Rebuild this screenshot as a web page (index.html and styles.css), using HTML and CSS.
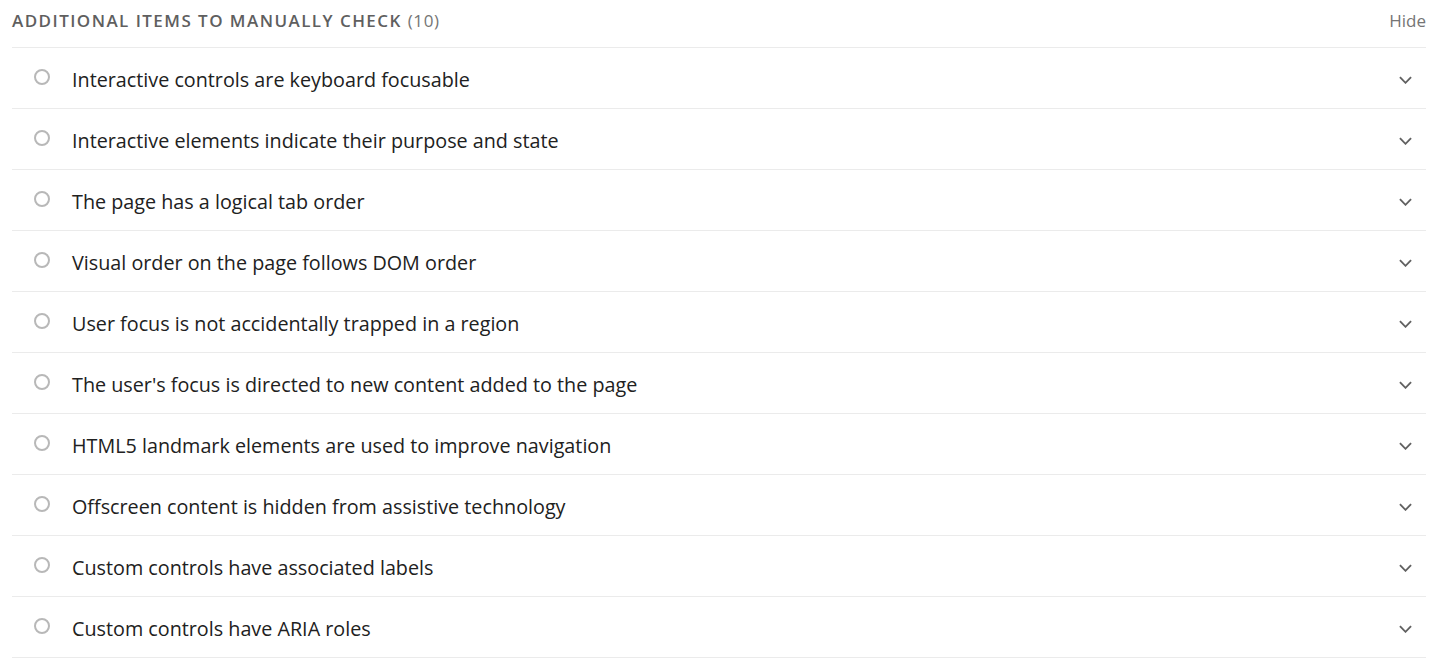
FILE: index.html
```html
<!DOCTYPE html>
<html>
<head>
<meta charset="utf-8">
<link rel="stylesheet" href="styles.css">
</head>
<body>
<section class="panel">
  <header class="head">
    <h2 class="title">ADDITIONAL ITEMS TO MANUALLY CHECK <span class="count">(10)</span></h2>
    <span class="hide">Hide</span>
  </header>
  <ul class="list">
    <li class="row"><span class="dot"></span><span class="label">Interactive controls are keyboard focusable</span><svg class="chev" viewBox="0 0 14 8"><path d="M1 1l6 6 6-6"/></svg></li>
    <li class="row"><span class="dot"></span><span class="label">Interactive elements indicate their purpose and state</span><svg class="chev" viewBox="0 0 14 8"><path d="M1 1l6 6 6-6"/></svg></li>
    <li class="row"><span class="dot"></span><span class="label">The page has a logical tab order</span><svg class="chev" viewBox="0 0 14 8"><path d="M1 1l6 6 6-6"/></svg></li>
    <li class="row"><span class="dot"></span><span class="label">Visual order on the page follows DOM order</span><svg class="chev" viewBox="0 0 14 8"><path d="M1 1l6 6 6-6"/></svg></li>
    <li class="row"><span class="dot"></span><span class="label">User focus is not accidentally trapped in a region</span><svg class="chev" viewBox="0 0 14 8"><path d="M1 1l6 6 6-6"/></svg></li>
    <li class="row"><span class="dot"></span><span class="label">The user's focus is directed to new content added to the page</span><svg class="chev" viewBox="0 0 14 8"><path d="M1 1l6 6 6-6"/></svg></li>
    <li class="row"><span class="dot"></span><span class="label">HTML5 landmark elements are used to improve navigation</span><svg class="chev" viewBox="0 0 14 8"><path d="M1 1l6 6 6-6"/></svg></li>
    <li class="row"><span class="dot"></span><span class="label">Offscreen content is hidden from assistive technology</span><svg class="chev" viewBox="0 0 14 8"><path d="M1 1l6 6 6-6"/></svg></li>
    <li class="row"><span class="dot"></span><span class="label">Custom controls have associated labels</span><svg class="chev" viewBox="0 0 14 8"><path d="M1 1l6 6 6-6"/></svg></li>
    <li class="row"><span class="dot"></span><span class="label">Custom controls have ARIA roles</span><svg class="chev" viewBox="0 0 14 8"><path d="M1 1l6 6 6-6"/></svg></li>
  </ul>
</section>
</body>
</html>
```

FILE: styles.css
```css
html, body {
  margin: 0;
  padding: 0;
  background: #fff;
}
body {
  font-family: "Open Sans", "Noto Sans", sans-serif;
  color: #212121;
}
.panel {
  padding: 0 10px 0 12px;
}
.head {
  display: flex;
  justify-content: space-between;
  align-items: center;
  height: 48px;
  padding-bottom: 7px;
  border-bottom: 1px solid #ebebeb;
  box-sizing: border-box;
}
.title {
  margin: 0;
  font-size: 17px;
  font-weight: 600;
  letter-spacing: 1.45px;
  color: #5f5f5f;
}
.count {
  font-weight: 400;
  letter-spacing: 0.6px;
  color: #757575;
}
.hide {
  font-size: 17px;
  color: #757575;
}
.list {
  list-style: none;
  margin: 0;
  padding: 0;
}
.row {
  display: flex;
  align-items: center;
  height: 61px;
  box-sizing: border-box;
  border-bottom: 1px solid #ebebeb;
}
.dot {
  width: 12px;
  height: 12px;
  border: 2.5px solid #b8b8b8;
  border-radius: 50%;
  margin-left: 22px;
  margin-right: 22px;
  margin-top: -2px;
  flex: none;
}
.label {
  flex: 1;
  font-size: 19.75px;
  color: #212121;
  padding-top: 2px;
}
.chev {
  width: 13px;
  height: 8px;
  margin-right: 14px;
  fill: none;
  stroke: #616161;
  stroke-width: 2;
  margin-top: 3px;
}
```
